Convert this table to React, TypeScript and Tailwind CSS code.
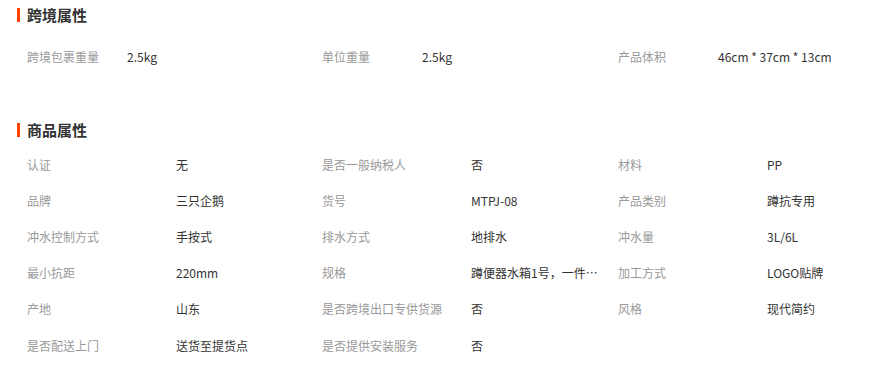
const crossBorder: [string, string][] = [
  ["跨境包裹重量", "2.5kg"],
  ["单位重量", "2.5kg"],
  ["产品体积", "46cm * 37cm * 13cm"],
];

const attrs: [string, string][] = [
  ["认证", "无"],
  ["是否一般纳税人", "否"],
  ["材料", "PP"],
  ["品牌", "三只企鹅"],
  ["货号", "MTPJ-08"],
  ["产品类别", "蹲抗专用"],
  ["冲水控制方式", "手按式"],
  ["排水方式", "地排水"],
  ["冲水量", "3L/6L"],
  ["最小抗距", "220mm"],
  ["规格", "蹲便器水箱1号，一件代发"],
  ["加工方式", "LOGO贴牌"],
  ["产地", "山东"],
  ["是否跨境出口专供货源", "否"],
  ["风格", "现代简约"],
  ["是否配送上门", "送货至提货点"],
  ["是否提供安装服务", "否"],
];

function SectionTitle({ title }: { title: string }) {
  return (
    <div className="flex h-[30px] items-center">
      <span className="h-[14px] w-[3px] bg-[#ff4400]" />
      <span className="ml-[7px] text-[15px] font-bold text-[#333]">{title}</span>
    </div>
  );
}

export default function App() {
  return (
    <div
      className="w-[884px] h-[365px] bg-white pl-[17px] text-[12px]"
      style={{ fontFamily: '"Noto Sans CJK SC", "Noto Sans", sans-serif' }}
    >
      <SectionTitle title="跨境属性" />
      <div className="mt-[9px] ml-[10px] grid grid-cols-[295px_296px_1fr]">
        {crossBorder.map(([label, value]) => (
          <div key={label} className="flex h-[36px] items-center">
            <span className="w-[100px] text-[#999]">{label}</span>
            <span className="text-[#333]">{value}</span>
          </div>
        ))}
      </div>

      {/* 商品属性 */}
      <div className="mt-[40px]">
        <SectionTitle title="商品属性" />
      </div>
      <div className="mt-[1.5px] ml-[10px] grid grid-cols-[295px_296px_1fr]">
        {attrs.map(([label, value]) => (
          <div key={label} className="flex h-[36.2px] items-center">
            <span className="w-[149px] shrink-0 text-[#999]">{label}</span>
            <span className="max-w-[128px] truncate text-[#333]">{value}</span>
          </div>
        ))}
      </div>
    </div>
  );
}
